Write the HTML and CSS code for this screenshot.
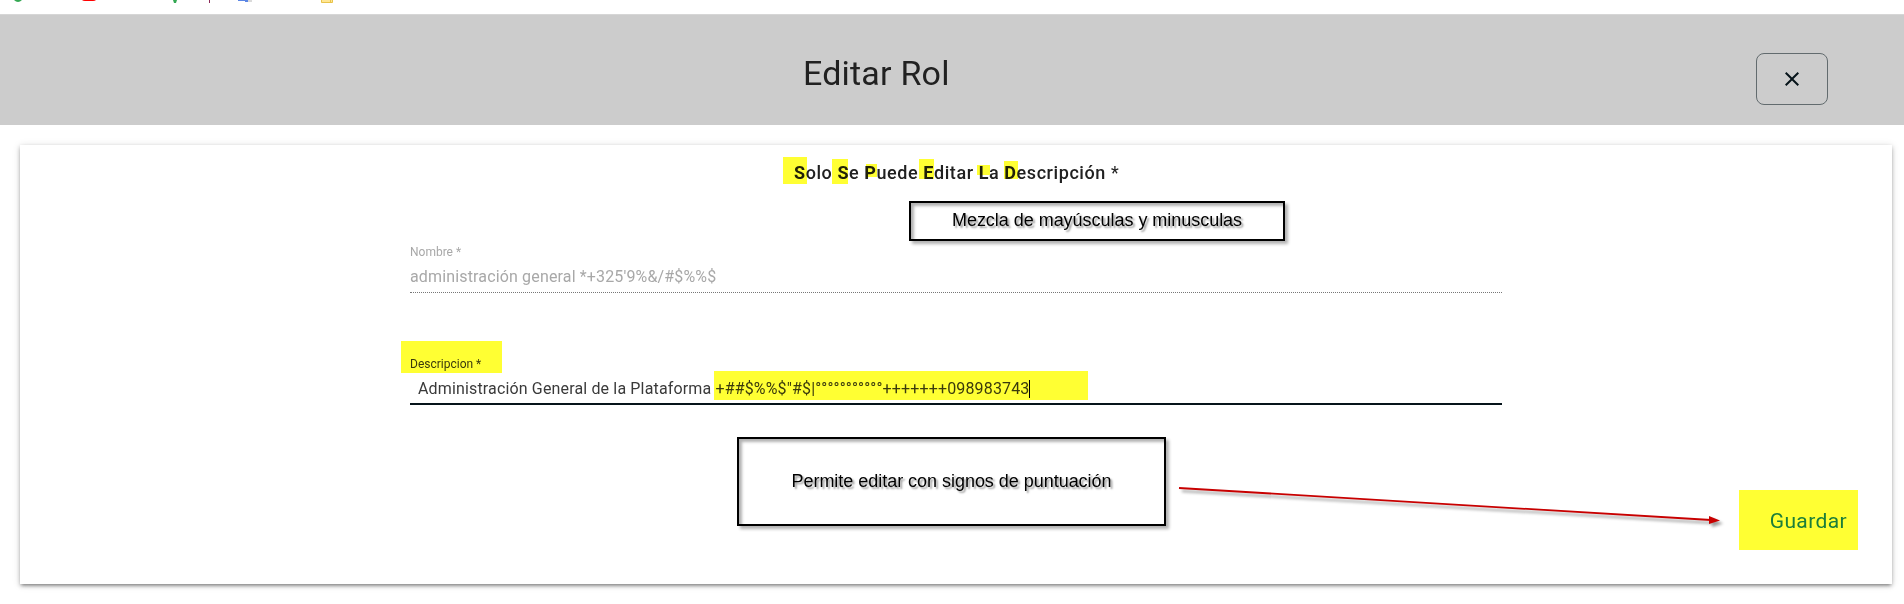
FILE: index.html
```html
<!DOCTYPE html>
<html lang="es">
<head>
<meta charset="utf-8">
<title>Editar Rol</title>
<link rel="stylesheet" href="styles.css">
</head>
<body>
<div class="page">
  <div class="bookmarks">
    <svg width="360" height="14" viewBox="0 0 360 14">
      <path d="M14 0h8q-4 4-8 0z" fill="#34a853"/>
      <path d="M82 0h14q-1 1-3 1h-8q-2 0-3-1z" fill="#f00"/>
      <path d="M173 0h4l-1 3h-2z" fill="#34a853"/>
      <path d="M209.500 0v3" stroke="#8b2a58"/>
      <path d="M246 0h6v2h-4z" fill="#dadada"/>
      <path d="M238 0h10v2h-3v-1h-7z" fill="#5b86e5"/>
      <path d="M321.500-1h11v3.500h-11z" fill="#ffe694" stroke="#e8c34a"/>
      <path d="M330.500 0v2" stroke="#e8c34a"/>
    </svg>
  </div>
  <header class="header">
    <h1 class="title">Editar Rol</h1>
    <button class="close" aria-label="Cerrar">
      <svg width="24" height="24" viewBox="0 0 24 24"><path fill="#06141a" d="M19 6.410 17.590 5 12 10.590 6.410 5 5 6.410 10.590 12 5 17.590 6.410 19 12 13.410 17.590 19 19 17.590 13.410 12z"/></svg>
    </button>
  </header>
  <main class="card">
    <p class="hint"><b>S</b>olo <b>S</b>e <b>P</b>uede <b>E</b>ditar <b>L</b>a <b>D</b>escripción <span class="star">*</span></p>
    <div class="field disabled">
      <label class="label">Nombre *</label>
      <div class="value">administración general *+325'9%&amp;/#$%%$</div>
    </div>
    <div class="field active">
      <label class="label">Descripcion *</label>
      <div class="value"><span>Administración General de la Plataforma +##$%%$"#$|°°°°°°°°°°°+++++++098983743</span><i class="caret"></i></div>
    </div>
    <div class="actions"><button class="save">Guardar</button></div>
  </main>
  <div class="mark m1"></div><div class="mark m2"></div><div class="mark m3"></div>
  <div class="mark m4"></div><div class="mark m5"></div><div class="mark m6"></div>
  <div class="mark m7"></div><div class="mark m8"></div><div class="mark m9"></div>
  <div class="note note-case"><span>Mezcla de mayúsculas y minusculas</span></div>
  <div class="note note-signs"><span>Permite editar con signos de puntuación</span></div>
  <svg class="arrow" width="570" height="60" viewBox="1170 475 570 60">
    <path d="M1179 488 1711 520" stroke="#c80000" stroke-width="1.800"/>
    <path d="M1709 516 1720 520.500 1709 524z" fill="#c80000"/>
  </svg>
</div>
</body>
</html>
```

FILE: styles.css
```css
* { box-sizing: border-box; }
body { margin: 0; background: #fff; font-family: Roboto, sans-serif; }
.page { position: relative; height: 604px; overflow: hidden; }
.bookmarks { height: 14px; }
.bookmarks svg { display: block; }
.header {
  height: 111px; background: #ccc; border-top: 1px solid #d6d6d6;
  display: grid; grid-template-columns: 1fr auto; align-items: start;
  padding: 38px 76px 0 0;
}
.title { margin: 0; padding: 0 0 0 803px; font-size: 34px; line-height: 40px; font-weight: 400; color: #212121; letter-spacing: 0.2px; white-space: nowrap; }
.close {
  width: 72px; height: 52px; padding: 0; border: 1px solid #626b6e; border-radius: 8px;
  background: transparent; display: flex; align-items: center; justify-content: center;
}
.card {
  margin: 20px 12px 0 20px; height: 439px; background: #fff;
  box-shadow: 0 3px 3px -2px rgba(0,0,0,.3), 0 2px 4px rgba(0,0,0,.24), 0 1px 8px rgba(0,0,0,.13);
  display: flex; flex-direction: column;
}
.hint { margin: 0; padding: 17px 0 0 774px; height: 100px; font-size: 18px; line-height: 22px; font-weight: 500; color: #212121; letter-spacing: .57px; white-space: nowrap; }
.hint b { font-weight: 700; }
.star { font-weight: 400; }
.field { width: 1092px; margin-left: 390px; height: 112px; }
.label { display: block; font-size: 12px; line-height: 14px; white-space: nowrap; }
.value { display: flex; font-size: 16px; line-height: 18px; white-space: nowrap; letter-spacing: .15px; }
.disabled { color: #a8a8a8; }
.disabled .value { height: 25px; margin-top: 9px; border-bottom: 1px dotted #777; }
.active { color: #3a3a3a; }
.active .value { padding-left: 8px; margin-top: 9px; height: 25px; border-bottom: 2px solid #06141a; }
.caret { width: 1px; height: 18px; background: #000; }
.actions { position: relative; z-index: 2; display: flex; justify-content: flex-end; padding-right: 45px; margin-top: 40px; }
.save { border: 0; padding: 0; background: none; font: 400 21px/24px Roboto, sans-serif; color: #1b7e3a; letter-spacing: .38px; }
.mark { position: absolute; background: #ff3; mix-blend-mode: multiply; }
.m1 { left: 783px; top: 157px; width: 24px; height: 27px; }
.m2 { left: 832px; top: 159px; width: 16px; height: 25px; }
.m3 { left: 866px; top: 164px; width: 11px; height: 13px; }
.m4 { left: 919px; top: 159px; width: 15px; height: 20px; }
.m5 { left: 977px; top: 165px; width: 13px; height: 10px; }
.m6 { left: 1004px; top: 161px; width: 14px; height: 18px; }
.m7 { left: 401px; top: 341px; width: 101px; height: 32px; }
.m8 { left: 714px; top: 371px; width: 374px; height: 29px; }
.m9 { left: 1739px; top: 490px; width: 119px; height: 60px; }
.note {
  position: absolute; display: flex; align-items: center; justify-content: center; padding-bottom: 2px;
  border: 2px solid #000; color: #000; font: 18px/20px "Liberation Sans", Arial, sans-serif; letter-spacing: -.03px; white-space: nowrap;
  box-shadow: 3px 3px 3px rgba(0,0,0,.3), inset 3px 3px 3px rgba(0,0,0,.3);
  text-shadow: 2px 2px 2px rgba(0,0,0,.4);
}
.note-case { left: 909px; top: 201px; width: 376px; height: 40px; }
.note-signs { left: 737px; top: 437px; width: 429px; height: 89px; }
.arrow { position: absolute; left: 1170px; top: 475px; filter: drop-shadow(3px 3px 1.500px rgba(0,0,0,.4)); }
```
